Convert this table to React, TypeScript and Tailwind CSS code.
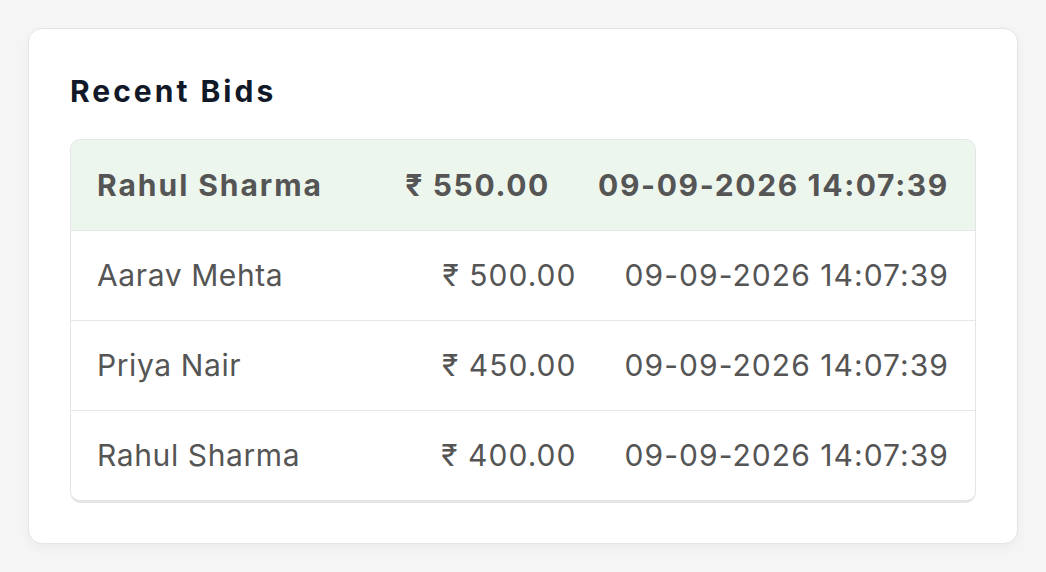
const bids = [
  { name: 'Rahul Sharma', amount: '₹ 550.00', time: '09-09-2026 14:07:39', top: true },
  { name: 'Aarav Mehta', amount: '₹ 500.00', time: '09-09-2026 14:07:39' },
  { name: 'Priya Nair', amount: '₹ 450.00', time: '09-09-2026 14:07:39' },
  { name: 'Rahul Sharma', amount: '₹ 400.00', time: '09-09-2026 14:07:39' },
]

export default function App() {
  return (
    <div className="min-h-screen bg-[#f5f5f5] p-[28px] font-['Inter',sans-serif]">
      {/* Card */}
      <div className="rounded-[14px] border border-[#e4e4e7] bg-white px-[41px] pt-[40px] pb-[40px] shadow-[0_4px_12px_rgba(0,0,0,0.04)]">
        <h2 className="text-[30px] font-bold leading-[44px] tracking-[0.1em] text-[#111827]">Recent Bids</h2>
        {/* Bids list */}
        <div className="mt-[26px] overflow-hidden rounded-[11px] border border-[#e4e4e7] border-b-[3px]">
          {bids.map((b, i) => (
            <div
              key={i}
              className={
                'flex h-[90px] items-center px-[26px] text-[30px] text-[#555555] ' +
                (i > 0 ? 'border-t border-[#e5e7eb] ' : '') +
                (b.top ? 'bg-[#edf6ed] font-bold tracking-[0.055em]' : 'bg-white tracking-[0.035em]')
              }
            >
              <span className={'flex-1 ' + (b.top ? 'tracking-[0.065em]' : 'tracking-[0.02em]')}>{b.name}</span>
              <span className="text-right">{b.amount}</span>
              <span className="ml-[48px]">{b.time}</span>
            </div>
          ))}
        </div>
      </div>
    </div>
  )
}
